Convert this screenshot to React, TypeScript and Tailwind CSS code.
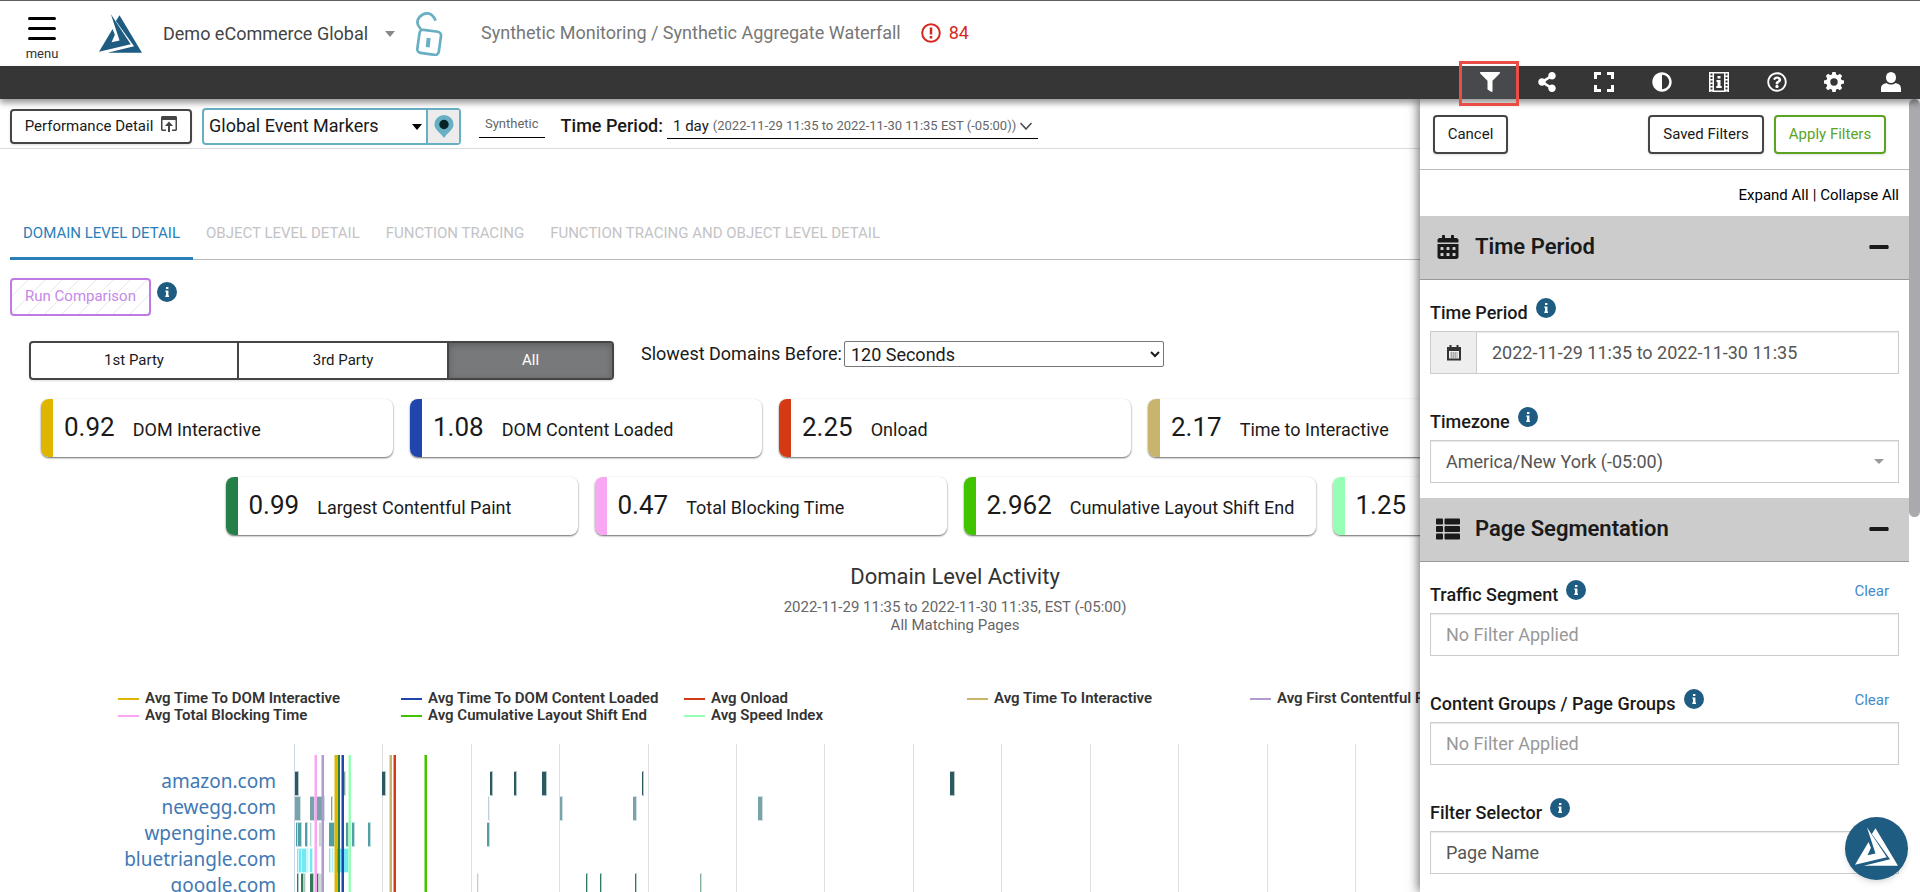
import type { ReactNode } from "react";
import {
  FaAdjust,
  FaCalendarAlt,
  FaFilter,
  FaMinus,
  FaRegQuestionCircle,
  FaShareAlt,
  FaThList,
} from "react-icons/fa";

const metrics = [
  { value: "0.92", label: "DOM Interactive", color: "bg-[#dfb500]" },
  { value: "1.08", label: "DOM Content Loaded", color: "bg-[#1f46ad]" },
  { value: "2.25", label: "Onload", color: "bg-[#d43a14]" },
  { value: "2.17", label: "Time to Interactive", color: "bg-[#c9b46e]" },
  { value: "0.62", label: "First Contentful Paint", color: "bg-[#b09ace]" },
  { value: "0.99", label: "Largest Contentful Paint", color: "bg-[#257f49]" },
  { value: "0.47", label: "Total Blocking Time", color: "bg-[#f9a6f3]" },
  { value: "2.962", label: "Cumulative Layout Shift End", color: "bg-[#41c300]" },
  { value: "1.25", label: "Speed Index", color: "bg-[#97ffb4]" },
];

const legend = [
  { label: "Avg Time To DOM Interactive", color: "bg-[#dfb500]" },
  { label: "Avg Time To DOM Content Loaded", color: "bg-[#1f46ad]" },
  { label: "Avg Onload", color: "bg-[#d43a14]" },
  { label: "Avg Time To Interactive", color: "bg-[#c9b46e]" },
  { label: "Avg First Contentful Paint", color: "bg-[#b09ace]" },
  { label: "Avg Largest Contentful Paint", color: "bg-[#257f49]" },
  { label: "Avg Total Blocking Time", color: "bg-[#f9a6f3]" },
  { label: "Avg Cumulative Layout Shift End", color: "bg-[#41c300]" },
  { label: "Avg Speed Index", color: "bg-[#97ffb4]" },
];

const domains = ["amazon.com", "newegg.com", "wpengine.com", "bluetriangle.com", "google.com"];

// [x, width, color] for every request bar of a domain row
type Bar = [number, number, string];
const rows: { y: number; bars: Bar[] }[] = [
  {
    y: 27,
    bars: [
      [1, 3, "#2a5a60"], [49, 2, "#7fa3a8"], [88, 3, "#2a5a60"], [196, 2, "#2a5a60"],
      [220, 2, "#2a5a60"], [248, 4, "#2a5a60"], [348, 1, "#2a5a60"], [656, 4, "#2a5a60"],
    ],
  },
  {
    y: 52,
    bars: [
      [1, 5, "#78a3a9"], [16, 4, "#78a3a9"], [23, 7, "#78a3a9"], [37, 1, "#78a3a9"],
      [194, 1, "#bcd3d6"], [266, 2, "#78a3a9"], [339, 3, "#78a3a9"], [464, 4, "#78a3a9"],
    ],
  },
  {
    y: 78,
    bars: [
      [2, 1, "#4f9fa5"], [4, 3, "#4f9fa5"], [11, 2, "#4f9fa5"], [16, 1, "#b5d5d8"],
      [25, 2, "#c8d6d8"], [35, 5, "#4f9fa5"], [52, 2, "#4f9fa5"], [58, 2, "#4f9fa5"],
      [74, 2, "#4f9fa5"], [193, 2, "#4f9fa5"],
    ],
  },
  {
    y: 104,
    bars: [
      [3, 1, "#6feaf5"], [5, 2, "#6feaf5"], [8, 4, "#6feaf5"], [13, 1, "#bdf5fa"],
      [16, 2, "#6feaf5"], [35, 1, "#6feaf5"], [38, 1, "#a9f1f7"], [43, 11, "#6feaf5"],
    ],
  },
  {
    y: 129,
    bars: [
      [3, 1, "#337a5b"], [7, 2, "#337a5b"], [10, 1, "#a9c6b9"], [16, 3, "#337a5b"],
      [23, 1, "#337a5b"], [25, 3, "#cfdcd6"], [183, 1, "#c6d0cb"], [292, 1, "#337a5b"],
      [306, 1, "#337a5b"], [341, 1, "#337a5b"], [406, 1, "#7fae97"],
    ],
  },
];

// [x, color] of the average markers
const markers: [number, string][] = [
  [21, "#f9a6f3"], [28, "#b09ace"], [41, "#dfb500"], [44, "#257f49"], [48, "#1f46ad"],
  [55, "#97ffb4"], [96, "#c9b46e"], [100, "#d43a14"], [131, "#41c300"],
];

const gridLines = [88, 177, 265, 354, 442, 530, 619, 707, 796, 884, 973, 1061, 1150, 1238, 1327, 1415];

function Logo({ className }: { className: string }) {
  return (
    <svg viewBox="0 0 130 117" className={className} fill="currentColor" aria-hidden="true">
      <path d="M36 0 96 91 0 114 41 45 48 62 38 85 62 80Z" />
      <path d="M62 3 130 117H26L106 97 51 21Z" />
    </svg>
  );
}

function UnlockIcon() {
  return (
    <svg viewBox="0 0 80 132" className="h-11 w-7" fill="none" stroke="#68afc3" strokeWidth="8" aria-hidden="true">
      <path d="M19 56 8 41C-2 20 20 3 37 4c10 1 17 9 23 22" />
      <rect x="8" y="56" width="65" height="70" rx="11" transform="rotate(8 40 91)" />
      <path d="M39 78 36 106" strokeWidth="12" />
    </svg>
  );
}

function InfoIcon() {
  return (
    <svg viewBox="0 0 20 20" className="size-5 shrink-0" aria-hidden="true">
      <circle cx="10" cy="10" r="10" fill="#1f5c82" />
      <path d="M9 5h2.400v2H9zM8.300 8.400h3.100v5.200h.6V15H8.300v-1.400H9V9.800h-.7z" fill="#fff" />
    </svg>
  );
}

function FullscreenIcon() {
  return (
    <svg viewBox="0 0 20 20" className="size-5" fill="none" stroke="currentColor" strokeWidth="3" aria-hidden="true">
      <path d="M1.500 7V1.500H7M13 1.500h5.500V7M18.500 13v5.500H13M7 18.500H1.500V13" />
    </svg>
  );
}

function FilmInfoIcon() {
  return (
    <svg viewBox="0 0 20 20" className="size-5" aria-hidden="true">
      <path d="M0 0h20v20H0z" fill="currentColor" />
      <path d="M5 1.500h10v17H5z" fill="#363636" />
      <path
        d="M2.500 1.500v18M17.500 1.500v18"
        stroke="#363636"
        strokeWidth="2"
        strokeDasharray="2 1.500"
      />
      <path d="M8.500 4h3v2.500h-3zM7.500 8h4v6h1.200v2H7.300v-2h1.200v-4h-1z" fill="currentColor" />
    </svg>
  );
}

function GearIcon() {
  return (
    <svg viewBox="0 0 20 20" className="size-5" aria-hidden="true">
      <g fill="currentColor">
        <path d="M8.400 0h3.200l.9 4h-5zM8.400 20h3.200l.9-4h-5zM0 8.400v3.200l4 .9v-5zM20 8.400v3.200l-4 .9v-5z" />
        <path
          d="M8.400 0h3.200l.9 4h-5zM8.400 20h3.200l.9-4h-5zM0 8.400v3.200l4 .9v-5zM20 8.400v3.200l-4 .9v-5z"
          transform="rotate(45 10 10)"
        />
      </g>
      <circle cx="10" cy="10" r="5.700" fill="none" stroke="currentColor" strokeWidth="4" />
    </svg>
  );
}

function UserIcon() {
  return (
    <svg viewBox="0 0 20 20" className="size-5" fill="currentColor" aria-hidden="true">
      <ellipse cx="10" cy="5.500" rx="5" ry="5.500" />
      <path d="M0 20v-3c0-4 2-5 5.500-6 2.500 2 6.500 2 9 0 3.500 1 5.500 2 5.500 6v3z" />
    </svg>
  );
}

function SmallCalendarIcon() {
  return (
    <svg viewBox="0 0 16 16" className="size-4" aria-hidden="true">
      <path d="M1 2h2.500V0h2v2h5V0h2v2H15v13.500H1zM3 6v7.500h10V6z" fill="#333" fillRule="evenodd" />
      <path d="M4.500 8h7M4.500 10h7M4.500 12h7" stroke="#666" strokeWidth="1" strokeDasharray="1.500 .5" />
    </svg>
  );
}

function ToolButton({ label, active, children }: { label: string; active?: boolean; children: ReactNode }) {
  return (
    <button
      type="button"
      aria-label={label}
      className={active ? "flex items-center justify-center bg-[#48494c] pb-px" : "flex items-center justify-center pb-px"}
    >
      {children}
    </button>
  );
}

function SectionHeader({ icon, title }: { icon: ReactNode; title: string }) {
  return (
    <div className="flex h-16 items-center border-b border-[#999] bg-[#ccc] pr-[19px] pb-0.5 pl-4">
      <span className="w-[39px]">{icon}</span>
      <h2 className="flex-1 text-[22px] font-semibold">{title}</h2>
      <button type="button" aria-label={`Collapse ${title}`}>
        <FaMinus className="size-[22px]" />
      </button>
    </div>
  );
}

function Field({ id, label, clear, children }: { id: string; label: string; clear?: boolean; children: ReactNode }) {
  return (
    <div className="mb-[15px] px-2.5">
      <div className="flex h-[51px] items-start pt-[18px]">
        <label htmlFor={id} className="mr-2 text-lg leading-[30px] font-medium">
          {label}
        </label>
        <InfoIcon />
        {clear && (
          <a href="#clear" className="mr-2.5 ml-auto text-[15px] leading-[22px] text-[#428bca]">
            Clear
          </a>
        )}
      </div>
      {children}
    </div>
  );
}

function FilterDrawer() {
  const box = "h-[43px] w-full rounded-none border border-[#ccc] bg-white px-[15px] text-lg text-[#555] shadow-[inset_0_1px_1px_rgba(0,0,0,0.08)] placeholder:text-[#999]";

  return (
    <aside className="absolute inset-y-0 right-0 flex w-[500px] overflow-hidden bg-white shadow-[-2px_0_10px_rgba(0,0,0,0.55)]">
      <div className="min-w-0 flex-1">
        <div className="flex h-[71px] items-start border-b border-[#bbb] pt-4 pr-[23px] pl-[13px] text-[15px]">
          <button type="button" className="h-[39px] w-[75px] rounded border-2 border-[#444547] shadow-sm">
            Cancel
          </button>
          <button type="button" className="mr-2.5 ml-auto h-[39px] w-[116px] rounded border-2 border-[#444547] shadow-sm">
            Saved Filters
          </button>
          <button type="button" className="h-[39px] w-[112px] rounded border-2 border-[#5ba423] text-[#5ba423] shadow-sm">
            Apply Filters
          </button>
        </div>

        <div className="flex h-[46px] items-center justify-end gap-1 pt-1 pr-2.5 text-[15px] text-black">
          <a href="#expand">Expand All</a>
          <span>|</span>
          <a href="#collapse">Collapse All</a>
        </div>

        <SectionHeader icon={<FaCalendarAlt className="size-6" />} title="Time Period" />
        <Field id="period" label="Time Period">
          <div className="flex">
            <span className="flex w-[46px] shrink-0 items-center justify-center border border-r-0 border-[#ccc] bg-[#eee]">
              <SmallCalendarIcon />
            </span>
            <input id="period" className={box} defaultValue="2022-11-29 11:35 to 2022-11-30 11:35" />
          </div>
        </Field>
        <Field id="timezone" label="Timezone">
          <div className="relative">
            <select id="timezone" className={`${box} appearance-none`}>
              <option>America/New York (-05:00)</option>
            </select>
            <span className="pointer-events-none absolute top-[19px] right-[15px] border-x-5 border-t-5 border-x-transparent border-t-[#999]" />
          </div>
        </Field>

        <SectionHeader icon={<FaThList className="size-6" />} title="Page Segmentation" />
        <Field id="traffic" label="Traffic Segment" clear>
          <input id="traffic" className={box} placeholder="No Filter Applied" />
        </Field>
        <Field id="groups" label="Content Groups / Page Groups" clear>
          <input id="groups" className={box} placeholder="No Filter Applied" />
        </Field>
        <Field id="selector" label="Filter Selector">
          <select id="selector" className={`${box} appearance-none`}>
            <option>Page Name</option>
          </select>
        </Field>
      </div>
      <div className="w-[11px] bg-white">
        <div className="h-[418px] rounded-full bg-[#a9a9ae]" />
      </div>
    </aside>
  );
}

function DomainChart() {
  return (
    <div className="flex">
      <ul className="w-[276px] shrink-0 pt-6 text-right font-['Noto_Sans',sans-serif] text-[19px] leading-[26px] text-[#4278b4]">
        {domains.map((name) => (
          <li key={name}>
            <a href={`#${name}`}>{name}</a>
          </li>
        ))}
      </ul>
      <svg className="ml-[18px] h-[148px] min-w-0 flex-1" shapeRendering="crispEdges" aria-label="Domain level activity chart">
        <rect x="0" y="0" width="1" height="148" fill="#ccd6eb" />
        {gridLines.map((x) => (
          <rect key={x} x={x} y="0" width="1" height="148" fill="#e0e0e0" />
        ))}
        {rows.map((row) =>
          row.bars.map(([x, width, color]) => (
            <g key={`${row.y}-${x}`}>
              <rect x={x} y={row.y} width={width + 1} height="25" fill={color} opacity="0.35" />
              <rect x={x} y={row.y + 1} width={width} height="23" fill={color} />
            </g>
          )),
        )}
        {markers.map(([x, color]) => (
          <g key={x}>
            <rect x={x - 1} y="11" width="3" height="137" fill={color} opacity="0.5" />
            <rect x={x} y="11" width="2" height="137" fill={color} />
          </g>
        ))}
      </svg>
    </div>
  );
}

export default function App() {
  return (
    <div className="flex h-screen flex-col overflow-hidden bg-white font-[Roboto,sans-serif] text-[#1a1a1a]">
      <header className="flex h-[66px] shrink-0 items-center border-t border-[#5f6063]">
        <button type="button" className="ml-[26px] flex w-8 flex-col items-center pt-3.5">
          <span className="flex w-7 flex-col gap-[7px]">
            <span className="h-[3px] rounded bg-black" />
            <span className="h-[3px] rounded bg-black" />
            <span className="h-[3px] rounded bg-black" />
          </span>
          <span className="mt-1 text-[13px] leading-5 text-[#333]">menu</span>
        </button>
        <Logo className="ml-[41px] h-[39px] w-[43px] text-[#1f5c82]" />
        <button type="button" className="ml-[21px] flex items-center text-lg text-[#444]">
          Demo eCommerce Global
          <span className="ml-[17px] border-x-5 border-t-6 border-x-transparent border-t-[#888]" />
        </button>
        <span className="ml-5">
          <UnlockIcon />
        </span>
        <div className="ml-[38px] flex items-center pb-0.5 text-lg">
          <h1 className="text-[#777]">Synthetic Monitoring / Synthetic Aggregate Waterfall</h1>
          <p className="ml-5 flex items-center gap-2 text-[#d4291f]">
            <svg viewBox="0 0 20 20" className="size-5" fill="none" stroke="currentColor" strokeWidth="2" aria-hidden="true">
              <circle cx="10" cy="10" r="8.800" />
              <path d="M10 4.500v7M10 13v2.500" strokeWidth="2.500" />
            </svg>
            84
          </p>
        </div>
      </header>

      <nav className="relative z-20 flex h-[33px] shrink-0 justify-end bg-[#363636] text-white shadow-[0_4px_6px_rgba(0,0,0,0.4)]">
        <div className="grid w-[459px] grid-cols-8">
          <ToolButton label="Filter" active>
            <FaFilter className="size-5" />
          </ToolButton>
          <ToolButton label="Share">
            <FaShareAlt className="size-5" />
          </ToolButton>
          <ToolButton label="Fullscreen">
            <FullscreenIcon />
          </ToolButton>
          <ToolButton label="Contrast">
            <FaAdjust className="size-5" />
          </ToolButton>
          <ToolButton label="Session info">
            <FilmInfoIcon />
          </ToolButton>
          <ToolButton label="Help">
            <FaRegQuestionCircle className="size-5" />
          </ToolButton>
          <ToolButton label="Settings">
            <GearIcon />
          </ToolButton>
          <ToolButton label="Account">
            <UserIcon />
          </ToolButton>
        </div>
        <span className="pointer-events-none absolute -top-[5px] right-[401px] h-[45px] w-[60px] border-3 border-[#ea4c46]" />
      </nav>

      <div className="relative min-h-0 flex-1">
        <main className="h-full overflow-hidden pr-2.5">
          <div className="flex h-[50px] items-center border-b border-[#dcdce0] pt-[5px] pl-2.5">
            <button
              type="button"
              className="flex h-[35px] w-[182px] items-center justify-center gap-2 rounded border-2 border-[#444547] text-[15px] shadow-sm"
            >
              Performance Detail
              <svg viewBox="0 0 16 16" className="mb-1 size-4" fill="#444547" aria-hidden="true">
                <path d="M1 0h14l1 1v13l-1 1h-4v-1.500h3.500V4h-13v9.500H5V15H1l-1-1V1z" />
                <path d="M8 5.500 12 10H9v6H7v-6H4z" />
              </svg>
            </button>
            <div className="ml-2.5 flex h-[37px] w-[259px] rounded border-2 border-[#68afc3]">
              <div className="relative flex-1">
                <select aria-label="Event markers" className="h-full w-full appearance-none px-[5px] text-lg">
                  <option>Global Event Markers</option>
                </select>
                <span className="pointer-events-none absolute top-[14px] right-1 border-x-5 border-t-6 border-x-transparent border-t-black" />
              </div>
              <button
                type="button"
                aria-label="Show markers"
                className="flex w-[33px] items-center justify-center border-l-2 border-[#68afc3] bg-[#ececec]"
              >
                <svg viewBox="0 0 20 23" className="h-[23px] w-5" aria-hidden="true">
                  <path d="M10 23C7 18 .5 15 .5 9.500a9.500 9.500 0 0 1 19 0C19.500 15 13 18 10 23z" fill="#68afc3" />
                  <circle cx="10" cy="9.500" r="4.700" fill="#062328" />
                </svg>
              </button>
            </div>
            <span className="ml-[18px] border-b border-black px-1.5 pb-[3px] text-[13px] text-[#666]">Synthetic</span>
            <span className="ml-4 text-lg font-medium">Time Period:</span>
            <button type="button" className="ml-1 flex items-center gap-1 border-b border-black pr-1.5 pl-1.5">
              <span className="text-[15px] leading-6">1 day</span>
              <span className="text-[13px] text-[#666]">(2022-11-29 11:35 to 2022-11-30 11:35 EST (-05:00))</span>
              <svg viewBox="0 0 12 8" className="h-2 w-3" fill="none" stroke="#444" strokeWidth="1.500" aria-hidden="true">
                <path d="m.500 1 5.500 6 5.500-6" />
              </svg>
            </button>
          </div>

          <div className="ml-2.5 flex h-[111px] items-end border-b border-[#bbb] text-[15px] text-[#c3c3c6]">
            <button type="button" className="-mb-px h-[51px] border-b-3 border-[#2a7fb8] px-[13px] text-[#2a7fb8]">
              DOMAIN LEVEL DETAIL
            </button>
            <button type="button" className="h-[51px] px-[13px]">OBJECT LEVEL DETAIL</button>
            <button type="button" className="h-[51px] px-[13px]">FUNCTION TRACING</button>
            <button type="button" className="h-[51px] px-[13px]">FUNCTION TRACING AND OBJECT LEVEL DETAIL</button>
          </div>

          <div className="flex gap-1.5 pt-[18px] pl-2.5">
            <button
              type="button"
              className="h-[38px] w-[141px] rounded border-2 border-[#c07ae6] bg-[repeating-linear-gradient(135deg,#fff_0px,#fff_11px,#e8e8e8_11px,#e8e8e8_12px)] pb-0.5 text-[15px] text-[#c58ae8]"
            >
              Run Comparison
            </button>
            <span className="pt-1">
              <InfoIcon />
            </span>
          </div>

          <div className="flex items-start pt-[25px] pl-[29px]">
            <div className="flex h-[39px] w-[585px] rounded border-2 border-[#444547] text-[15px] shadow">
              <button type="button" className="w-[208px] border-r-2 border-[#444547]">1st Party</button>
              <button type="button" className="w-[210px] border-r-2 border-[#444547]">3rd Party</button>
              <button type="button" className="flex-1 bg-[#78797b] text-white shadow-[inset_0_2px_6px_rgba(0,0,0,0.25)]">All</button>
            </div>
            <label htmlFor="slowest" className="ml-[27px] text-lg leading-[26px]">
              Slowest Domains Before:
            </label>
            <select id="slowest" className="ml-0.5 h-[26px] w-80 rounded-xs border border-[#767676] pl-0.5 text-lg leading-6">
              <option>120 Seconds</option>
            </select>
          </div>

          <div className="flex flex-wrap justify-center gap-x-[17px] gap-y-5 pt-[19px]">
            {metrics.map((metric) => (
              <div key={metric.label} className="flex h-[58px] w-[352px] overflow-hidden rounded-lg bg-white shadow-[0_1px_2px_rgba(0,0,0,0.6)]">
                <span className={`w-3 ${metric.color}`} />
                <p className="flex items-baseline gap-[18px] pt-2.5 pl-[11px] text-lg">
                  <span className="text-[26px] leading-9">{metric.value}</span>
                  {metric.label}
                </p>
              </div>
            ))}
          </div>

          <div className="pt-[26px] text-center">
            <h2 className="text-[22px] leading-8 text-[#333]">Domain Level Activity</h2>
            <p className="pt-[5px] text-[15px] leading-[18px] text-[#666]">2022-11-29 11:35 to 2022-11-30 11:35, EST (-05:00)</p>
            <p className="text-[15px] leading-[18px] text-[#666]">All Matching Pages</p>
          </div>

          <ul className="grid grid-cols-[repeat(6,283px)] pt-14 pl-[118px] text-[15px] leading-[17px] font-semibold text-[#333]">
            {legend.map((item) => (
              <li key={item.label} className="flex items-center gap-1.5">
                <span className={`h-0.5 w-[21px] ${item.color}`} />
                {item.label}
              </li>
            ))}
          </ul>

          <div className="pt-5">
            <DomainChart />
          </div>
        </main>

        <FilterDrawer />

        <button
          type="button"
          aria-label="Open assistant"
          className="absolute right-3 bottom-3 flex size-[63px] items-center justify-center rounded-full bg-[#1f5c82] pb-1 text-white shadow-md"
        >
          <Logo className="h-[39px] w-[43px]" />
        </button>
      </div>
    </div>
  );
}
